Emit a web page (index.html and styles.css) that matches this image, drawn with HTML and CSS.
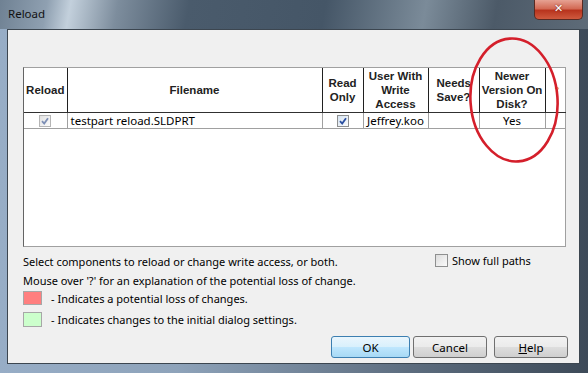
FILE: index.html
```html
<!DOCTYPE html>
<html lang="en">
<head>
    <meta charset="UTF-8">
    <title>Reload</title>
    <link rel="stylesheet" href="styles.css">
</head>
<body>
    <div class="window">
        <!-- Aero title bar -->
        <div class="titlebar">
            <span class="title">Reload</span>
            <div class="close-btn">&#x2715;</div>
        </div>

        <div class="client">
            <!-- File list -->
            <div class="grid-box">
                <table class="grid">
                    <colgroup>
                        <col style="width:43px">
                        <col style="width:255px">
                        <col style="width:41px">
                        <col style="width:65px">
                        <col style="width:51px">
                        <col style="width:66px">
                        <col style="width:21px">
                    </colgroup>
                    <thead>
                        <tr>
                            <th>Reload</th>
                            <th>Filename</th>
                            <th>Read<br>Only</th>
                            <th>User With<br>Write<br>Access</th>
                            <th class="clip">Needs<br>Save?</th>
                            <th>Newer<br>Version On<br>Disk?</th>
                            <th class="help-col">?</th>
                        </tr>
                    </thead>
                    <tbody>
                        <tr>
                            <td class="center"><span class="check disabled"><svg viewBox="0 0 10 10"><path d="M2 5.2 L4.2 7.6 L8 2.2" /></svg></span></td>
                            <td class="name">testpart reload.SLDPRT</td>
                            <td class="center"><span class="check"><svg viewBox="0 0 10 10"><path d="M2 5.2 L4.2 7.6 L8 2.2" /></svg></span></td>
                            <td class="center">Jeffrey.koo</td>
                            <td></td>
                            <td class="center">Yes</td>
                            <td></td>
                        </tr>
                    </tbody>
                </table>
            </div>

            <!-- Notes and legend -->
            <div class="info">
                <div class="notes">
                    <div class="line">Select components to reload or change write access, or both.</div>
                    <div class="line">Mouse over '?' for an explanation of the potential loss of change.</div>
                    <div class="legend first">
                        <span class="swatch red"></span>
                        <span>- Indicates a potential loss of changes.</span>
                    </div>
                    <div class="legend">
                        <span class="swatch green"></span>
                        <span>- Indicates changes to the initial dialog settings.</span>
                    </div>
                </div>
                <label class="full-paths"><span class="check empty"></span>Show full paths</label>
            </div>

            <div class="buttons">
                <button class="btn default">OK</button>
                <button class="btn">Cancel</button>
                <button class="btn wide-gap"><u>H</u>elp</button>
            </div>
        </div>

        <!-- Red annotation drawn over the dialog -->
        <svg class="annotation" width="96" height="132" viewBox="0 0 96 132">
            <ellipse cx="47" cy="64" rx="43.5" ry="61.5" transform="rotate(-4 47 64)" />
        </svg>
    </div>
</body>
</html>
```

FILE: styles.css
```css
/* Page */
body {
    margin: 0;
    padding: 0;
    font-family: 'Noto Sans', 'Open Sans', sans-serif;
    font-size: 11px;
    color: #000;
}

/* Window frame */
.window {
    position: relative;
    width: 588px;
    height: 373px;
    box-sizing: border-box;
    background: linear-gradient(90deg, #97adc6 0%, #8ea3ba 30%, #5c6c7e 70%, #3d4a58 100%);
    overflow: hidden;
}

.titlebar {
    height: 29px;
    display: flex;
    align-items: flex-start;
    justify-content: space-between;
    background: linear-gradient(100deg, #6f8193 0%, #8fa0b1 8%, #c3d0dc 12%, #7d8d9d 20%, #4a5b6c 32%, #455667 55%, #7b8b99 72%, #4c5a68 84%, #5e6b78 100%);
}

.title {
    font-family: 'Noto Sans', sans-serif;
    font-size: 11.5px;
    color: #111;
    padding: 6px 0 0 8px;
}

.close-btn {
    width: 47px;
    height: 19px;
    margin-right: 5px;
    border: 1px solid #5a2a22;
    border-top: none;
    border-radius: 0 0 5px 5px;
    background: linear-gradient(180deg, #e6a293 0%, #d36a55 45%, #b8341e 55%, #cf5a3e 100%);
    color: #fff;
    font-family: 'DejaVu Sans', sans-serif;
    font-weight: bold;
    font-size: 11px;
    text-align: center;
    line-height: 18px;
    text-shadow: 0 0 2px #6a1a10;
}

/* Client area */
.client {
    height: 335px;
    margin: 0 8px 0 7px;
    box-sizing: border-box;
    border: 1px solid #3c4650;
    background: #f0f0f0;
    padding: 37px 0 0 15px;
    display: flex;
    flex-direction: column;
}

/* File grid */
.grid-box {
    width: 543px;
    height: 180px;
    box-sizing: border-box;
    border: 1px solid #a0a0a0;
    border-left-color: #646464;
    background: #fff;
}

.grid {
    border-collapse: collapse;
    table-layout: fixed;
    width: 542px;
}

.grid th {
    height: 44px;
    padding: 0;
    font-family: 'Liberation Sans', Arial, sans-serif;
    font-weight: bold;
    font-size: 11.5px;
    line-height: 14px;
    color: #222;
    text-align: center;
    vertical-align: middle;
    border-left: 1px solid #202020;
    border-bottom: 1px solid #303030;
    overflow: hidden;
    white-space: nowrap;
}

.grid th:first-child {
    border-left: none;
}

.grid th.clip {
    text-align: left;
    padding-left: 8px;
}

.grid th.help-col {
    color: #e8a030;
    font-size: 8px;
    text-align: left;
    padding-left: 9px;
}

.grid td {
    height: 15px;
    padding: 0;
    font-size: 11.5px;
    line-height: 15px;
    border-left: 1px solid #a0a0a0;
    border-bottom: 1px solid #a0a0a0;
    white-space: nowrap;
    overflow: hidden;
}

.grid td:first-child {
    border-left: none;
}

.grid td.center {
    text-align: center;
}

.grid td.name {
    padding-left: 3px;
}

/* Checkboxes */
.check {
    display: inline-block;
    width: 12px;
    height: 12px;
    box-sizing: border-box;
    border: 1px solid #8e8f8f;
    background: linear-gradient(135deg, #d6e4f2, #fbfbfb);
    vertical-align: middle;
    margin-top: -2px;
}

.check svg {
    display: block;
    width: 10px;
    height: 10px;
}

.check path {
    fill: none;
    stroke: #2b4fa0;
    stroke-width: 1.8;
}

.check.disabled path {
    stroke: #7d8fb5;
}

.check.disabled {
    border-color: #b5b5b5;
    background: linear-gradient(135deg, #e2e2e2, #fbfbfb);
}

.check.empty {
    width: 13px;
    height: 13px;
    margin: 0 4px 0 0;
    background: linear-gradient(135deg, #dcdcdc, #fbfbfb);
}

/* Notes and legend */
.info {
    display: flex;
    justify-content: space-between;
    width: 543px;
    margin-top: 5px;
}

.line {
    line-height: 19px;
    height: 19px;
}

.legend {
    display: flex;
    align-items: center;
    height: 20px;
    margin-top: 1px;
}

.legend.first {
    margin-top: -2px;
}

.swatch {
    width: 19px;
    height: 14px;
    box-sizing: border-box;
    border: 1px solid #a7a7a7;
    margin-right: 9px;
}

.swatch.red {
    background: #ff7f7f;
}

.swatch.green {
    background: #ccffcc;
    height: 15px;
}

.full-paths {
    display: flex;
    align-items: center;
    height: 16px;
    padding-right: 2px;
    width: 129px;
}

/* Dialog buttons */
.buttons {
    display: flex;
    justify-content: flex-end;
    width: 545px;
    margin-top: 7px;
}

.btn {
    width: 74px;
    height: 22px;
    margin-left: 3px;
    padding: 0;
    font-family: 'Noto Sans', 'Open Sans', sans-serif;
    font-size: 11.5px;
    color: #000;
    border: 1px solid #707070;
    border-radius: 3px;
    background: linear-gradient(180deg, #f2f2f2 0%, #ebebeb 48%, #dddddd 52%, #cfcfcf 100%);
}

.btn.default {
    width: 79px;
    border-color: #3c7fb1;
    background: linear-gradient(180deg, #eaf6fd 0%, #d9f0fc 48%, #bee6fd 52%, #a7d9f5 100%);
}

.btn.wide-gap {
    margin-left: 7px;
}

/* Red annotation ellipse */
.annotation {
    position: absolute;
    left: 467px;
    top: 36px;
}

.annotation ellipse {
    fill: none;
    stroke: #d41f2b;
    stroke-width: 2.6;
}
```
